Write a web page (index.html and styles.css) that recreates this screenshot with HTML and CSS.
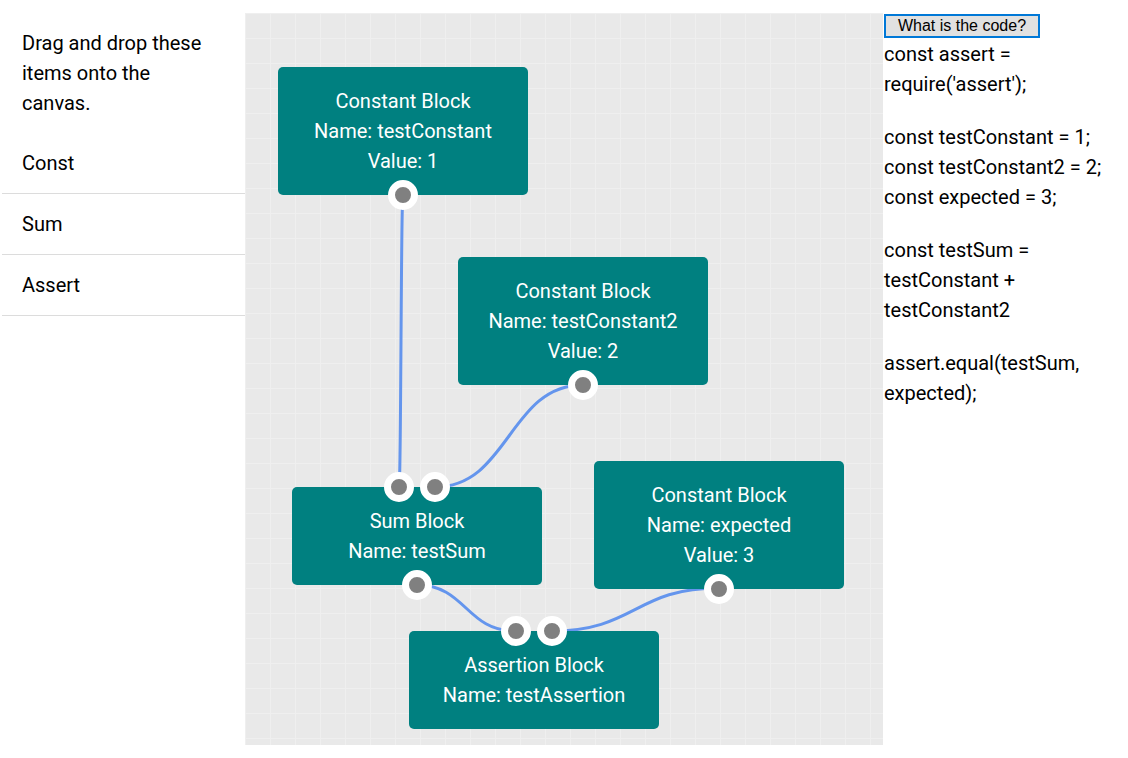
FILE: index.html
```html
<!DOCTYPE html>
<html lang="en">
<head>
<meta charset="utf-8">
<title>Blocks</title>
<link rel="stylesheet" href="styles.css">
</head>
<body>
<div class="app">
  <aside class="palette">
    <p class="palette-hint">Drag and drop these items onto the canvas.</p>
    <ul class="palette-list">
      <li class="palette-item">Const</li>
      <li class="palette-item">Sum</li>
      <li class="palette-item">Assert</li>
    </ul>
  </aside>

  <main class="canvas">
    <svg class="links" width="638" height="732" viewBox="0 0 638 732">
      <path d="M158,182 C156,182 156,474 154,474"/>
      <path d="M338,372 C264,372 264,474 190,474"/>
      <path d="M172,572 C221,572 221,618 270,618"/>
      <path d="M474,575 C390,575 390,618 307,618"/>
    </svg>

    <div class="block" style="left:33px;top:54px;">
      <div>Constant Block</div>
      <div>Name: testConstant</div>
      <div>Value: 1</div>
      <span class="port port-out"></span>
    </div>

    <div class="block" style="left:213px;top:244px;">
      <div>Constant Block</div>
      <div>Name: testConstant2</div>
      <div>Value: 2</div>
      <span class="port port-out"></span>
    </div>

    <div class="block" style="left:47px;top:474px;">
      <span class="port port-in-a"></span>
      <span class="port port-in-b"></span>
      <div>Sum Block</div>
      <div>Name: testSum</div>
      <span class="port port-out"></span>
    </div>

    <div class="block" style="left:349px;top:448px;">
      <div>Constant Block</div>
      <div>Name: expected</div>
      <div>Value: 3</div>
      <span class="port port-out"></span>
    </div>

    <div class="block" style="left:164px;top:618px;">
      <span class="port port-in-a"></span>
      <span class="port port-in-b"></span>
      <div>Assertion Block</div>
      <div>Name: testAssertion</div>
    </div>
  </main>

  <section class="code-panel">
    <button class="code-button" type="button">What is the code?</button>
    <div class="code">
      <p>const assert = require('assert');</p>
      <p>const testConstant = 1;<br>const testConstant2 = 2;<br>const expected = 3;</p>
      <p>const testSum = testConstant + testConstant2</p>
      <p>assert.equal(testSum, expected);</p>
    </div>
  </section>
</div>
</body>
</html>
```

FILE: styles.css
```css
* { box-sizing: border-box; }

html, body {
  margin: 0;
  padding: 0;
  background: #fff;
}

body {
  font-family: Roboto, "Liberation Sans", Arial, sans-serif;
  font-size: 20px;
  line-height: 30px;
  color: #000;
}

.app {
  display: flex;
  align-items: flex-start;
  width: 1128px;
}

/* Palette */
.palette {
  width: 243px;
  margin: 13px 0 0 2px;
  flex: none;
}

.palette-hint {
  margin: 0;
  padding: 15px 30px 15px 20px;
}

.palette-list {
  list-style: none;
  margin: 0;
  padding: 0;
}

.palette-item {
  padding: 15px 20px;
  border-bottom: 1px solid #dcdcdc;
}

/* Canvas */
.canvas {
  position: relative;
  flex: none;
  width: 638px;
  height: 732px;
  margin-top: 13px;
  background-color: #e9e9e9;
  background-image:
    linear-gradient(to right, #efefef 1px, transparent 1px),
    linear-gradient(to bottom, #efefef 1px, transparent 1px);
  background-size: 25px 25px;
  overflow: hidden;
}

.links {
  position: absolute;
  left: 0;
  top: 0;
}

.links path {
  fill: none;
  stroke: #6495ed;
  stroke-width: 3;
}

.block {
  position: absolute;
  width: 250px;
  padding: 19px 0;
  background: #008080;
  color: #fff;
  text-align: center;
  border-radius: 5px;
}

.port {
  position: absolute;
  width: 30px;
  height: 30px;
  border-radius: 50%;
  background: #808080;
  border: 7px solid #fff;
}

.port-out {
  left: 110px;
  bottom: -15px;
}

.port-in-a {
  left: 92px;
  top: -15px;
}

.port-in-b {
  left: 128px;
  top: -15px;
}

/* Code panel */
.code-panel {
  flex: none;
  width: 236px;
  margin-left: 1px;
}

.code-button {
  display: block;
  width: 156px;
  height: 24px;
  margin: 14px 0 0 0;
  padding: 0;
  font-family: "Liberation Sans", Arial, sans-serif;
  font-size: 16px;
  line-height: 20px;
  color: #000;
  background: #e1e1e1;
  border: 2px solid #0078d7;
  border-radius: 0;
}

.code {
  padding-top: 1px;
}

.code p {
  margin: 0 0 23px 0;
}
```
